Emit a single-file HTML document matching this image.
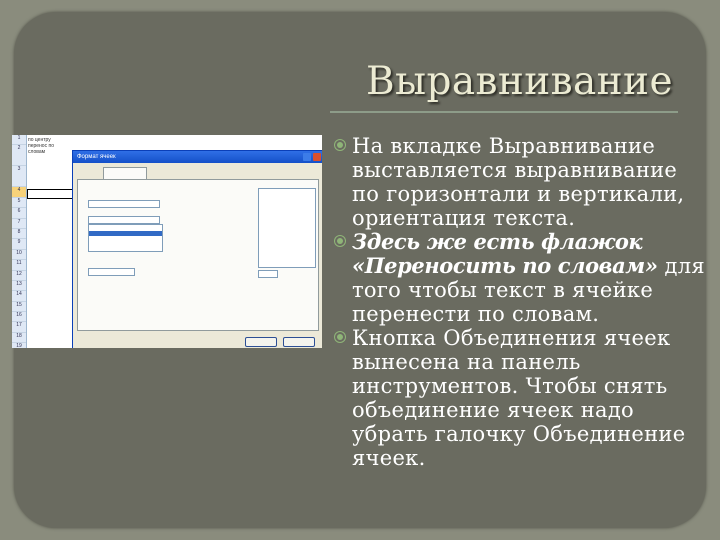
<!DOCTYPE html>
<html><head><meta charset="utf-8"><style>
body{margin:0;width:720px;height:540px;overflow:hidden;background:#8a8c7d;font-family:"DejaVu Serif","Liberation Serif",serif}
.panel{position:absolute;left:14px;top:12px;width:692px;height:516px;background:#6a6b60;border-radius:42px;box-shadow:0 0 3px #55564c}
.title{position:absolute;left:366px;top:59px;font-size:39px;color:#ecebd3;text-shadow:2px 2px 2px #2d2d26;letter-spacing:0.4px}
.rule{position:absolute;left:330px;top:111px;width:348px;height:2px;background:#8d9c89}
.txt{position:absolute;left:352px;top:134px;width:370px;font-size:21px;line-height:24px;color:#fff;white-space:nowrap;letter-spacing:0.3px}
.txt b{letter-spacing:-0.4px}
.txt p{margin:0;position:relative}
.txt p:before{content:"";position:absolute;left:-15px;top:8px;width:6px;height:6px;border-radius:50%;background:#8fb578;box-shadow:0 0 0 2px #6a6b60,0 0 0 3px #8fb578}
.shot{position:absolute;left:12px;top:135px;width:310px;height:213px;background:#fff;overflow:hidden;font-family:"Liberation Sans",sans-serif;font-size:5px;color:#333}
.rows{position:absolute;left:0;top:0;width:14px;height:213px;background:#dfe8f5;border-right:1px solid #9eb6ce}
.rows div{height:9.4px;border-bottom:1px solid #c5d3e3;text-align:center;color:#335}
.dlg{position:absolute;left:60px;top:15px;width:250px;height:198px;background:#ece9d8;border:1px solid #0a3fb8}
.bar{height:12px;background:linear-gradient(#2f6fe6,#1450c8);color:#fff;font-size:6px;padding-left:4px;line-height:12px}
.inner{position:absolute;left:4px;top:28px;width:240px;height:150px;background:#fbfbf8;border:1px solid #919b9c}
.btn{position:absolute;top:186px;width:30px;height:8px;border:1px solid #2c4f95;background:#f4f4ee;border-radius:2px}
.box{position:absolute;background:#fff;border:1px solid #7f9db9}
</style></head><body>
<div class="panel"></div>
<div class="title">Выравнивание</div>
<div class="rule"></div>
<div class="shot">
 <div class="rows"><div>1</div><div style="height:20px">2</div><div style="height:20px">3</div><div style="background:#f7d27a">4</div><div>5</div><div>6</div><div>7</div><div>8</div><div>9</div><div>10</div><div>11</div><div>12</div><div>13</div><div>14</div><div>15</div><div>16</div><div>17</div><div>18</div><div>19</div></div>
 <div style="position:absolute;left:16px;top:2px">по центру<br>перенос по<br>словам</div>
 <div style="position:absolute;left:15px;top:54px;width:44px;height:8px;border:1px solid #000"></div>
 <div class="dlg">
  <div class="bar">Формат ячеек</div>
  <div style="position:absolute;right:2px;top:2px;width:8px;height:8px;background:#d9502f;border-radius:1px"></div>
  <div style="position:absolute;right:12px;top:2px;width:8px;height:8px;background:#3c7ce8;border-radius:1px"></div>
  <div style="position:absolute;left:30px;top:16px;width:42px;height:12px;background:#fbfbf8;border:1px solid #919b9c;border-bottom:none"></div>
  <div class="inner">
   <div class="box" style="left:10px;top:20px;width:70px;height:6px"></div>
   <div class="box" style="left:10px;top:36px;width:70px;height:6px"></div>
   <div class="box" style="left:10px;top:44px;width:73px;height:26px"><div style="margin-top:6px;height:5px;background:#316ac5"></div></div>
   <div class="box" style="left:10px;top:88px;width:45px;height:6px"></div>
   <div class="box" style="left:180px;top:8px;width:56px;height:78px"></div>
   <div class="box" style="left:180px;top:90px;width:18px;height:6px"></div>
  </div>
  <div class="btn" style="left:172px"></div><div class="btn" style="left:210px"></div>
 </div>
</div>
<div class="txt">
<p>На вкладке Выравнивание<br>выставляется выравнивание<br>по горизонтали и вертикали,<br>ориентация текста.</p>
<p><b><i>Здесь же есть флажок<br>«Переносить по словам»</i></b> для<br>того чтобы текст в ячейке<br>перенести по словам.</p>
<p>Кнопка Объединения ячеек<br>вынесена на панель<br>инструментов. Чтобы снять<br>объединение ячеек надо<br>убрать галочку Объединение<br>ячеек.</p>
</div>
</body></html>
